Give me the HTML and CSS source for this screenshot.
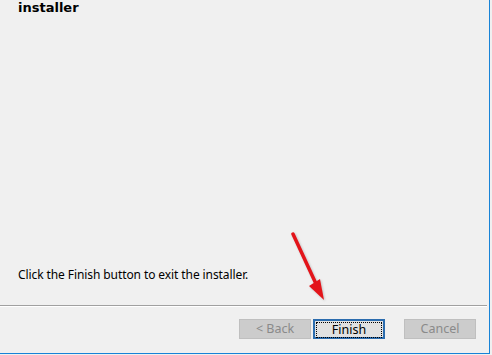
FILE: index.html
```html
<!DOCTYPE HTML>
<html>
<head>
  <title>Setup - Finish</title>
  <meta name="viewport" content="width=device-width, initial-scale=1">
  <link rel="stylesheet" href="styles.css">
</head>
<body>
  <div class="window">
    <div class="title">installer</div>
    <p class="message">Click the Finish button to exit the installer.</p>
    <div class="separator"></div>
    <div class="buttons">
      <button class="btn" disabled>&lt; Back</button>
      <button class="btn btn-default"><span class="focus">Finish</span></button>
      <button class="btn btn-cancel" disabled>Cancel</button>
    </div>
    <svg class="arrow" width="50" height="80" viewBox="0 0 50 80">
      <line x1="3" y1="3" x2="27" y2="55" stroke="#e3141a" stroke-width="3.5" stroke-linecap="round"/>
      <polygon points="19,55 30,48 34,69" fill="#e3141a"/>
    </svg>
  </div>
</body>
</html>
```

FILE: styles.css
```css
html {
  font-family: "Noto Sans", sans-serif;
}
body {
  margin: 0;
  background-color: #f0f0f0;
}
.window {
  position: relative;
  display: flex;
  flex-direction: column;
  width: 489px;
  height: 353px;
  border-right: 1px solid #1883d7;
  border-bottom: 1px solid #1883d7;
  background-color: #f0f0f0;
}
.title {
  font-family: "DejaVu Sans", sans-serif;
  font-weight: bold;
  font-size: 13px;
  line-height: 15px;
  color: #000;
  padding-left: 18px;
}
.message {
  margin: auto 0 22px 0;
  padding-left: 18px;
  font-size: 12px;
  line-height: 16px;
  letter-spacing: -0.09px;
  color: #000;
}
.separator {
  margin-right: 2px;
  border-top: 1px solid #a0a0a0;
  border-bottom: 1px solid #ffffff;
}
.buttons {
  display: flex;
  justify-content: flex-end;
  gap: 2px;
  margin-top: 12px;
  padding-right: 13px;
  height: 34px;
}
.btn {
  width: 72px;
  height: 20px;
  padding: 0;
  font-family: "Noto Sans", sans-serif;
  font-size: 12.5px;
  line-height: 16px;
  color: #000;
  background-color: #e1e1e1;
  border: 1px solid #adadad;
}
.btn:disabled {
  color: #8a8a8a;
  background-color: #cccccc;
  border-color: #bfbfbf;
}
.btn-default {
  border: 2px solid #2b6cae;
  padding: 1px;
}
.focus {
  display: block;
  height: 14px;
  line-height: 14px;
  border: 1px dotted #000;
}
.btn-cancel {
  margin-left: 17px;
}
.arrow {
  position: absolute;
  left: 290px;
  top: 231px;
  filter: drop-shadow(1px 1px 1px rgba(0,0,0,.2));
}
```
